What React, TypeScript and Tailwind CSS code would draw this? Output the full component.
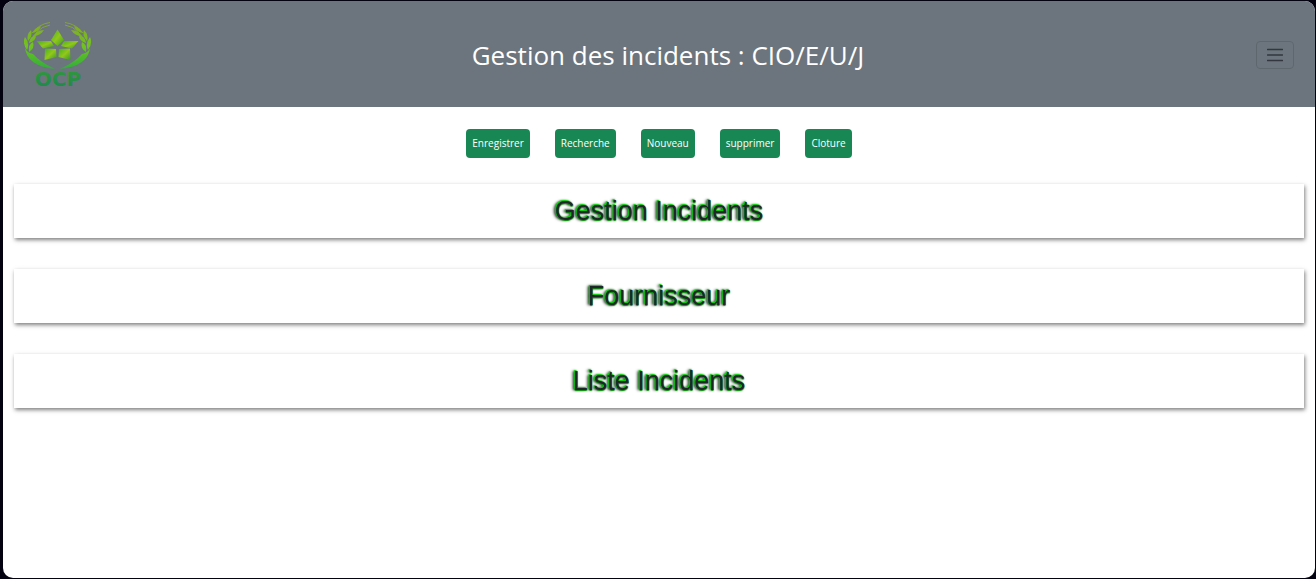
const actions = ["Enregistrer", "Recherche", "Nouveau", "supprimer", "Cloture"];
const sections = ["Gestion Incidents", "Fournisseur", "Liste Incidents"];

function Laurel() {
  return (
    <g fill="none" stroke="url(#leaf)">
      <path d="M26 3.5Q15 5 8 14" strokeWidth="0.9" />
      <path d="M26 6Q18 7 12 14" strokeWidth="0.9" />
      <g fill="url(#leaf)" stroke="none">
        <path d="M9 14Q10 9 17 7Q16 12 9 14Z" />
        <path d="M9 17Q13 11 20 11Q16 17 9 17Z" />
        <path d="M4 22Q2 16 7 11Q9 17 4 22Z" />
        <path d="M5 24Q6 17 12 16Q12 22 5 24Z" />
        <path d="M3 31Q-2 24 1 18Q6 24 3 31Z" />
        <path d="M5 33Q4 25 9 23Q11 29 5 33Z" />
        <path d="M1 29Q3 47 31 50Q16 43 9 35Q3 34 1 29Z" />
      </g>
    </g>
  );
}

function Logo() {
  return (
    <svg viewBox="0 0 68 72" className="h-[72px] w-[68px]" role="img" aria-label="OCP">
      <defs>
        <linearGradient id="leaf" gradientUnits="userSpaceOnUse" x1="0" y1="4" x2="0" y2="50">
          <stop offset="0" stopColor="#86a82a" />
          <stop offset="0.5" stopColor="#70c41c" />
          <stop offset="1" stopColor="#2fae3c" />
        </linearGradient>
        <linearGradient id="petal" x1="0" y1="0" x2="1" y2="1">
          <stop offset="0" stopColor="#43ae22" />
          <stop offset="0.5" stopColor="#92c81a" />
          <stop offset="1" stopColor="#359a28" />
        </linearGradient>
        <linearGradient id="word" x1="0" y1="0" x2="0" y2="1">
          <stop offset="0" stopColor="#329b38" />
          <stop offset="1" stopColor="#1b8650" />
        </linearGradient>
      </defs>
      <Laurel />
      <g transform="matrix(-1 0 0 1 67 0)">
        <Laurel />
      </g>
      <g fill="url(#petal)">
        <path d="M33.5 10.5L40 21L33.5 27L27 21Z" />
        <path d="M54.5 22L48 29.5L37 27L40 22Z" />
        <path d="M12.5 22L27 22L30 27L19 29.5Z" />
        <path d="M46.5 41L34.5 38L35 30L46 29.5Z" />
        <path d="M20.5 41L21 29.5L32 30L32.5 38Z" />
      </g>
      <text x="34" y="67" textAnchor="middle" fill="url(#word)" className="font-['DejaVu_Sans',sans-serif] text-[20px] leading-5 font-bold">OCP</text>
    </svg>
  );
}

export default function App() {
  return (
    <div className="min-h-screen bg-[#020211] pt-px pr-px pb-px pl-[3px] font-['Open_Sans',sans-serif]">
      <div className="min-h-[calc(100vh-2px)] overflow-hidden rounded-[10px] bg-white">
        <header className="flex items-center bg-[#6c757d] px-[21px] pt-[18px] pb-4">
          <Logo />
          <h1 className="flex-1 pr-3 text-center text-[26px] leading-8 text-white">Gestion des incidents : CIO/E/U/J</h1>
          <button aria-label="Menu" className="flex h-7 w-[38px] items-center justify-center rounded border border-[#5f676e]">
            <svg viewBox="0 0 16 14" className="h-3.5 w-4" stroke="#32383d" strokeWidth="1.3" strokeLinecap="round">
              <path d="M.5 1.5h15M.5 7h15M.5 12.5h15" />
            </svg>
          </button>
        </header>
        <main className="px-[11px] pt-[22px]">
          <div className="flex flex-wrap justify-center gap-[25px]">
            {actions.map((label) => (
              <button key={label} className="h-[29px] rounded bg-[#198754] px-1.5 pb-0.5 text-[10px] leading-4 text-white">
                {label}
              </button>
            ))}
          </div>
          <div className="mt-[26px] flex flex-col gap-[31px]">
            {sections.map((title) => (
              <section key={title} className="bg-white py-[9px] text-center shadow-[1px_2px_4px_rgba(0,0,0,0.5)]">
                <h2 className="font-['Liberation_Sans',sans-serif] text-[27px] leading-9 text-[#212529] [text-shadow:-1px_-1px_1px_#00d800,0_1px_1px_#009000,-2px_0_3px_#000]">
                  {title}
                </h2>
              </section>
            ))}
          </div>
        </main>
      </div>
    </div>
  );
}
